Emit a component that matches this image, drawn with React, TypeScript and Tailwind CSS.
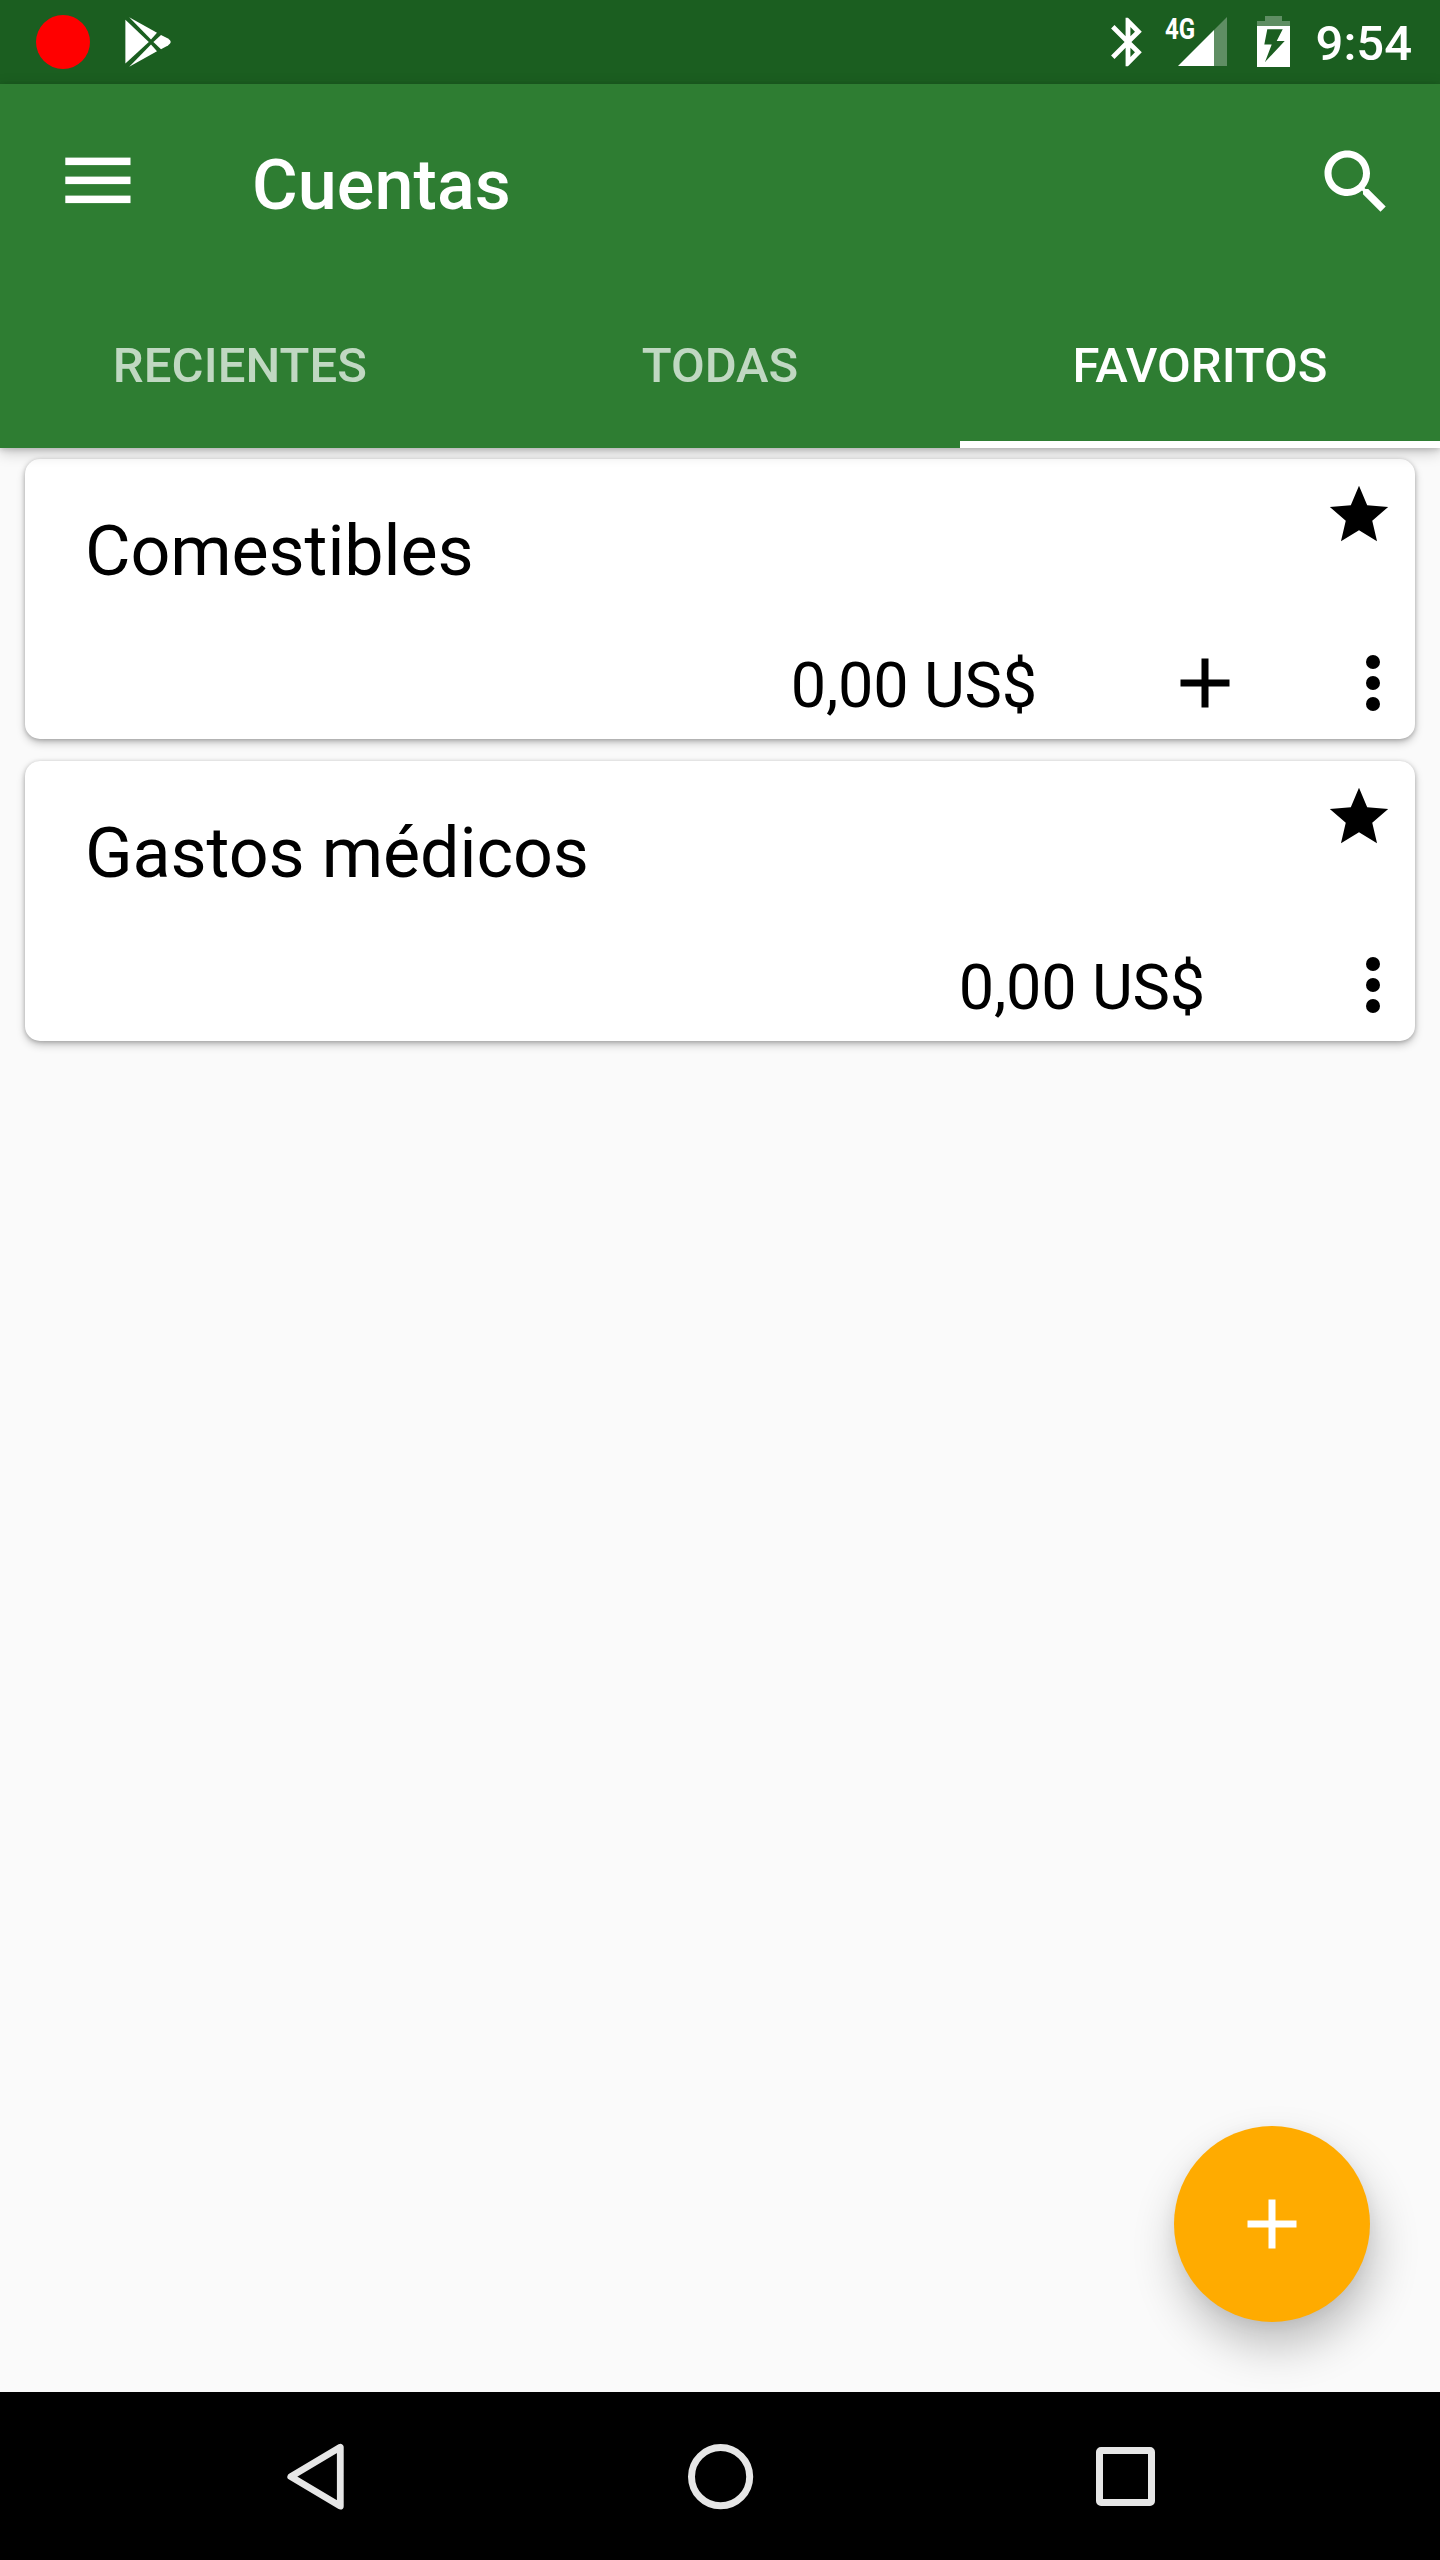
const STAR = "M12 17.27L18.18 21l-1.64-7.03L22 9.24l-7.19-.61L12 2 9.19 8.63 2 9.24l5.46 4.73L5.82 21z";
const PLUS = "M19 13h-6v6h-2v-6H5v-2h6V5h2v6h6v2z";

function StatusBar() {
  return (
    <div className="flex h-[84px] items-start bg-[#1b5e20] text-white">
      <div className="mt-[15px] ml-9 size-[54px] rounded-full bg-[#ff0000]" />
      <svg className="mt-[15px] ml-[34px]" width="50" height="54" viewBox="0 0 50 54" fill="currentColor">
        <path d="M1.4 4.8V48.6L24.8 27Z" />
        <path d="M5.2 2.2L33 17.8 27 24.6Z" />
        <path d="M5.2 51.8L33 36.2 27 29.4Z" />
        <path d="M29.4 27L37 20 44 23.6Q49.5 27 44 30.4L37 34.2Z" />
      </svg>
      <div className="grow" />
      <svg className="mt-[13px] shrink-0" width="58" height="58" viewBox="0 0 24 24" fill="currentColor">
        <path d="M17.71 7.71L12 2h-1v7.59L6.41 5 5 6.41 10.59 12 5 17.59 6.41 19 11 14.41V22h1l5.71-5.71-4.3-4.29 4.3-4.29zM13 5.83l1.88 1.88L13 9.59V5.83zm1.88 10.46L13 18.17v-3.76l1.88 1.88z" />
      </svg>
      <div className="relative ml-2 h-[84px] w-[62px] shrink-0">
        <span className="absolute top-[14px] left-0 origin-left scale-x-[.83] text-[29px] leading-[30px] font-bold">4G</span>
        <svg className="absolute top-[17px] left-[13px]" width="49" height="49" viewBox="0 0 49 49" fill="currentColor">
          <path d="M0 49L36 13V49Z" />
          <path d="M36 13L49 0V49H36Z" opacity=".3" />
        </svg>
      </div>
      <svg className="mt-4 ml-[30px] shrink-0" width="33" height="51" viewBox="0 0 33 51" fill="currentColor">
        <path d="M8 0H25V5H33V10H0V5H8Z" opacity=".3" />
        <path fillRule="evenodd" d="M0 10H33V51H0ZM10.3 13.3L7.3 28.6H14.7L8 46 27.7 25H19.7L25.7 13.3Z" />
      </svg>
      <span className="mt-[15px] mr-7 ml-[26px] text-[49px] leading-[58px] font-medium">9:54</span>
    </div>
  );
}

function AppBar() {
  return (
    <header className="relative z-10 bg-[#2e7d32] text-white shadow-[0_4px_14px_rgba(0,0,0,0.22),0_2px_5px_rgba(0,0,0,0.14)]">
      <div className="flex h-[196px] items-start">
        <svg className="mt-[73px] ml-[65px]" width="66" height="47" viewBox="0 0 66 47" fill="currentColor">
          <rect x=".3" y=".6" width="65.2" height="7.5" />
          <rect x=".3" y="19.6" width="65.2" height="7.5" />
          <rect x=".3" y="38.6" width="65.2" height="7.5" />
        </svg>
        <h1 className="mt-[60px] ml-[121px] text-[70px] leading-[82px] font-medium tracking-[0.1px]">Cuentas</h1>
        <svg className="mt-14 mr-[42px] ml-auto" width="84" height="84" viewBox="0 0 24 24" fill="currentColor">
          <path d="M15.5 14h-.79l-.28-.27C15.41 12.59 16 11.11 16 9.5 16 5.91 13.09 3 9.5 3S3 5.91 3 9.5 5.91 16 9.5 16c1.61 0 3.09-.59 4.23-1.57l.27.28v.79l5 4.99L20.49 19l-4.99-5zm-6 0C7.01 14 5 11.99 5 9.5S7.01 5 9.5 5 14 7.01 14 9.5 11.99 14 9.5 14z" />
        </svg>
      </div>
      <nav className="grid h-[168px] grid-cols-3 text-center text-[49px] leading-[58px] font-medium">
        <div className="pt-[57px] tracking-[0.1px] text-white/70">RECIENTES</div>
        <div className="pt-[57px] text-white/70">TODAS</div>
        <div className="border-b-[7px] border-white pt-[57px]">FAVORITOS</div>
      </nav>
    </header>
  );
}

function AccountCard({ name, canAdd }: { name: string; canAdd: boolean }) {
  return (
    <section className="flex h-[280px] flex-col rounded-[15px] bg-white text-black shadow-[0_4px_9px_rgba(0,0,0,0.22),0_1px_4px_rgba(0,0,0,0.22)]">
      <div className="flex h-[182px] justify-between pr-[21px] pl-[60px]">
        <h2 className="mt-[51px] text-[70px] leading-[82px] tracking-[-0.1px]">{name}</h2>
        <svg className="mt-[21px]" width="70" height="70" viewBox="0 0 24 24" fill="currentColor">
          <path d={STAR} />
        </svg>
      </div>
      <div className="flex h-[84px] items-center justify-end">
        <span className="mt-[5px] mr-[126px] text-[63px] leading-[74px] tracking-[-0.2px]">0,00 US$</span>
        {canAdd && (
          <svg className="mr-[84px]" width="84" height="84" viewBox="0 0 24 24" fill="currentColor">
            <path d={PLUS} />
          </svg>
        )}
        <svg width="84" height="84" viewBox="0 0 24 24" fill="currentColor">
          <circle cx="12" cy="6" r="2" />
          <circle cx="12" cy="12" r="2" />
          <circle cx="12" cy="18" r="2" />
        </svg>
      </div>
    </section>
  );
}

function NavigationBar() {
  return (
    <footer className="relative z-10 flex h-[168px] items-center bg-black pl-[282px] text-[#e6e6e6]">
      <svg width="68" height="70" viewBox="0 0 68 70" fill="none" stroke="currentColor" strokeWidth="6.8" strokeLinejoin="round">
        <path d="M58.3 6.2V65.2L8.8 35.7Z" />
      </svg>
      <svg className="ml-[335px]" width="70" height="70" viewBox="0 0 70 70" fill="none" stroke="currentColor" strokeWidth="7">
        <circle cx="35.6" cy="35.7" r="29.1" />
      </svg>
      <svg className="ml-[335px]" width="70" height="70" viewBox="0 0 70 70" fill="none" stroke="currentColor" strokeWidth="7">
        <rect x="9.5" y="9.5" width="52" height="52" rx="1.5" />
      </svg>
    </footer>
  );
}

export default function App() {
  return (
    <div className="flex h-[2560px] w-[1440px] flex-col overflow-hidden bg-[#fafafa] font-['Roboto',sans-serif]">
      <StatusBar />
      <AppBar />
      <main className="relative flex grow flex-col gap-[22px] pt-[11px] pr-[25px] pl-[25px]">
        <AccountCard name="Comestibles" canAdd />
        <AccountCard name="Gastos médicos" canAdd={false} />
        <button className="absolute right-[70px] bottom-[70px] flex size-[196px] items-center justify-center rounded-full bg-[#ffab00] text-white shadow-[4px_24px_46px_rgba(0,0,0,0.24),0_4px_16px_rgba(0,0,0,0.06)]">
          <svg width="84" height="84" viewBox="0 0 24 24" fill="currentColor">
            <path d={PLUS} />
          </svg>
        </button>
      </main>
      <NavigationBar />
    </div>
  );
}
